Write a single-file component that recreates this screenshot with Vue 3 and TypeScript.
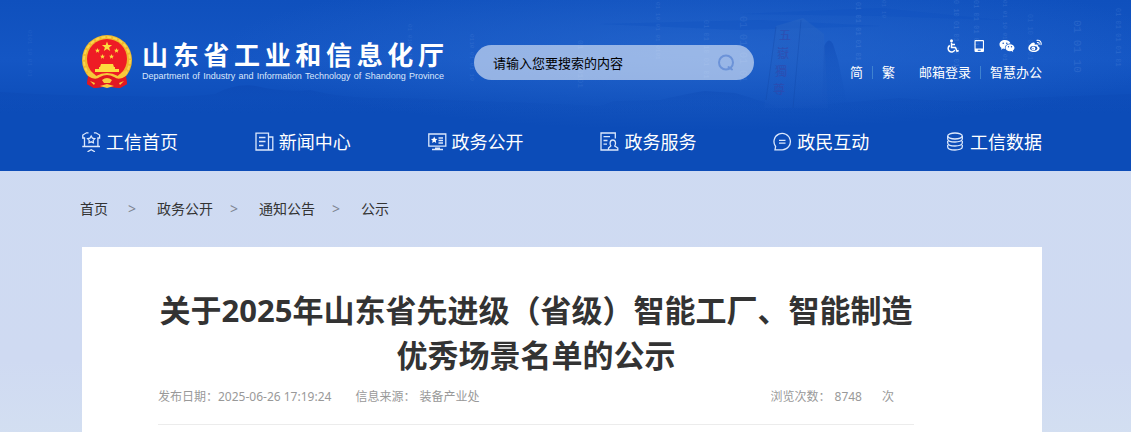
<script setup lang="ts">
import { ref } from 'vue'

type IconName = 'home' | 'news' | 'screen' | 'service' | 'chat' | 'data'

interface NavItem {
  label: string
  icon: IconName
}

interface Stream {
  x: number
  y: number
  size: number
  opacity: number
  bits: string
}

const keyword = ref('')

const navItems: NavItem[] = [
  { label: '工信首页', icon: 'home' },
  { label: '新闻中心', icon: 'news' },
  { label: '政务公开', icon: 'screen' },
  { label: '政务服务', icon: 'service' },
  { label: '政民互动', icon: 'chat' },
  { label: '工信数据', icon: 'data' },
]

const crumbs: string[] = ['首页', '政务公开', '通知公告', '公示']

const streams: Stream[] = [
  { x: 28, y: 30, size: 6, opacity: 0.08, bits: '0101 10 01 01' },
  { x: 408, y: 24, size: 6, opacity: 0.1, bits: '01 0101 10 0101' },
  { x: 470, y: 34, size: 6, opacity: 0.12, bits: '0110 01 01 10' },
  { x: 578, y: 40, size: 8, opacity: 0.1, bits: '01 10 0101' },
  { x: 656, y: 2, size: 6, opacity: 0.13, bits: '01 10 01 01 0101' },
  { x: 704, y: 20, size: 7, opacity: 0.12, bits: '01 01 10 01 01' },
  { x: 740, y: 16, size: 10, opacity: 0.1, bits: '01 01 01 01' },
  { x: 856, y: 2, size: 7, opacity: 0.16, bits: '01 01 01 01 01 0' },
  { x: 882, y: 0, size: 6, opacity: 0.12, bits: '01 10' },
  { x: 954, y: 0, size: 7, opacity: 0.16, bits: '0 10 01 01 10 01' },
  { x: 974, y: 0, size: 7, opacity: 0.16, bits: '01 01 01 01' },
  { x: 1003, y: 0, size: 6, opacity: 0.16, bits: '01 01 10 01 01 01 0' },
  { x: 1028, y: 14, size: 7, opacity: 0.1, bits: '01 10 01 01' },
  { x: 1074, y: 20, size: 11, opacity: 0.12, bits: '01 01 10' },
  { x: 1116, y: 8, size: 7, opacity: 0.14, bits: '01 01 01 01 01' },
]

const inscription: string[] = ['五', '嶽', '獨', '尊']
</script>

<template>
  <div class="page">
    <header class="header">
      <svg class="scenery" viewBox="0 0 1131 171" preserveAspectRatio="xMidYMin slice" aria-hidden="true">
        <defs>
          <linearGradient id="rock" x1="0" y1="0" x2="0" y2="1">
            <stop offset="0" stop-color="#2a66c4" stop-opacity="0.5" />
            <stop offset="1" stop-color="#1a58c0" stop-opacity="0.2" />
          </linearGradient>
          <linearGradient id="hill" x1="0" y1="0" x2="0" y2="1">
            <stop offset="0" stop-color="#0a43ae" stop-opacity="0.4" />
            <stop offset="1" stop-color="#0c4cb8" stop-opacity="0" />
          </linearGradient>
        </defs>
        <path d="M740 14 L880 8 L1000 20 L880 16 Z M600 24 L760 20 L880 26 L740 30 Z" fill="#0f4fc0" opacity="0.35" />
        <path d="M0 92 Q60 96 130 96 Q180 98 215 94 Q235 83 256 86 Q280 92 310 90 Q350 100 400 98 L560 104 L600 106 L614 101 L660 100 Q690 93 705 91 L735 93 Q760 100 780 108 L900 98 Q960 104 1020 98 L1131 94 L1131 116 L0 116 Z" fill="url(#hill)" />
        <path d="M822 108 L824 46 Q829 36 833 44 L838 60 L848 108 Z" fill="url(#hill)" />
        <path d="M764 108 L776 26 L803 18 L824 34 L828 108 Z" fill="url(#rock)" />
        <path d="M801 20 L793 108 M776 27 L766 100" stroke="#1148aa" stroke-opacity="0.4" fill="none" />
        <g v-for="(s, i) in streams" :key="i">
          <text class="bits" :transform="`translate(${s.x} ${s.y}) rotate(90)`" :font-size="s.size" :opacity="s.opacity">{{ s.bits }}</text>
        </g>
        <text
          v-for="(c, i) in inscription"
          :key="c"
          class="inscription"
          :x="779 - i * 2"
          :y="40 + i * 18"
          font-size="12"
        >{{ c }}</text>
      </svg>

      <div class="masthead">
        <a class="brand" href="#">
          <svg class="emblem" viewBox="0 0 50 54" aria-hidden="true">
            <path d="M7 38 L5 49 L12 53 L21 52 L25 50 L29 52 L38 53 L45 49 L43 38 Z" fill="#d81420" />
            <circle cx="25" cy="25" r="25" fill="#f0b92c" />
            <circle cx="25" cy="25" r="23" fill="none" stroke="#fbd54c" stroke-width="2" stroke-dasharray="4 2" />
            <circle cx="25" cy="24" r="20" fill="#ee1c25" />
            <path d="M25 6.500 l1.300 3.500 3.800.1 -3 2.300 1.100 3.600 -3.200-2.100 -3.200 2.100 1.100-3.600 -3-2.300 3.800-.1z" fill="#fddc3e" />
            <g fill="#fddc3e">
              <path d="M15.500 13 l.7 1.700 1.800.1 -1.400 1.100 .5 1.800 -1.600-1 -1.600 1 .5-1.800 -1.400-1.100 1.800-.1z" />
              <path d="M34.500 13 l.7 1.700 1.800.1 -1.400 1.100 .5 1.800 -1.600-1 -1.600 1 .5-1.800 -1.400-1.100 1.800-.1z" />
              <path d="M20.500 19 l.7 1.700 1.800.1 -1.400 1.100 .5 1.800 -1.600-1 -1.600 1 .5-1.800 -1.400-1.100 1.800-.1z" />
              <path d="M29.500 19 l.7 1.700 1.800.1 -1.400 1.100 .5 1.800 -1.600-1 -1.600 1 .5-1.800 -1.400-1.100 1.800-.1z" />
              <path d="M19 29 h12 l1 3 h-14z M17 32 h16 v2 h4 v3 H13 v-3 h4z" />
            </g>
            <path d="M5 35 Q11 37 14 41 Q25 35 36 41 Q39 37 45 35 L43 42 Q37 45 33 43 Q25 39 17 43 Q13 45 7 42 Z" fill="#f7c93a" />
            <path d="M6 41 Q13 46 18 42 Q25 38 32 42 Q37 46 44 41 L45 49 L38 53 L29 52 L25 50 L21 52 L12 53 L5 49 Z" fill="#e01822" />
            <path d="M20 45 Q25 41 30 45 L28 48 H22 Z M8 46 l5 2 -1 2z M42 46 l-5 2 1 2z M18 51 L25 49 L32 51 L25 53 Z" fill="#f9cf3d" />
          </svg>
          <span class="brand-text">
            <span class="brand-cn">山东省工业和信息化厅</span>
            <span class="brand-en">Department of Industry and Information Technology of Shandong Province</span>
          </span>
        </a>

        <form class="search" role="search" @submit.prevent>
          <input v-model="keyword" class="search-input" type="text" placeholder="请输入您要搜索的内容" aria-label="搜索" />
          <button class="search-button" type="submit" aria-label="搜索">
            <svg viewBox="0 0 18 18" aria-hidden="true">
              <circle cx="9" cy="8.500" r="7" fill="none" stroke="#6c93d8" stroke-width="2" />
              <path d="M11.500 13 L15 15.500" stroke="#6c93d8" stroke-width="2" stroke-linecap="round" />
            </svg>
          </button>
        </form>

        <div class="tools">
          <div class="tool-icons">
            <a href="#" aria-label="无障碍">
              <svg viewBox="0 0 14 14" fill="none" stroke="#fff" stroke-width="1.500" aria-hidden="true">
                <circle cx="6.500" cy="1.700" r="1.500" fill="#fff" stroke="none" />
                <path d="M6.500 3.500 V8.500 H10.500 L12 12.300 L13.700 11.500 M6.500 5.500 H10" />
                <path d="M4.800 6.500 A3.500 3.500 0 1 0 9.800 11" />
              </svg>
            </a>
            <a href="#" aria-label="移动端">
              <svg viewBox="0 0 14 14" aria-hidden="true">
                <path d="M3.500 1 H11 a1 1 0 0 1 1 1 V12 a1 1 0 0 1 -1 1 H3.500 a1 1 0 0 1 -1 -1 V2 a1 1 0 0 1 1 -1 Z M3.600 2.200 V9.500 H10.900 V2.200 Z M5.800 10.800 v1 h2.900 v-1z" fill="#fff" fill-rule="evenodd" />
              </svg>
            </a>
            <a href="#" aria-label="微信">
              <svg class="wide" viewBox="0 0 16 14" aria-hidden="true">
                <path d="M6 1 C2.700 1 .5 3 .5 5.500 C.5 7 1.300 8.200 2.500 9 L2 10.700 L4.100 9.600 L6 9.900 C5.400 6.700 8 4.500 11.500 4.500 C11 2.400 8.800 1 6 1 Z" fill="#fff" />
                <path d="M11 5.300 C8.400 5.300 6.500 6.900 6.500 8.800 C6.500 10.800 8.400 12.300 11 12.300 L12.500 12.100 L14.200 13 L13.800 11.500 C14.900 10.900 15.500 9.900 15.500 8.800 C15.500 6.900 13.500 5.300 11 5.300 Z" fill="#fff" />
                <g fill="#1a57bf">
                  <circle cx="4.200" cy="4.300" r=".8" /><circle cx="7.800" cy="4.300" r=".8" />
                  <circle cx="9.500" cy="7.800" r=".7" /><circle cx="12.500" cy="7.800" r=".7" />
                </g>
              </svg>
            </a>
            <a href="#" aria-label="微博">
              <svg viewBox="0 0 14 14" aria-hidden="true">
                <path d="M5.500 3.600 C3.500 3.600 .3 6.800 .3 9.200 C.3 11.500 2.900 13 5.900 13 C9.400 13 11.600 11 11.600 9.200 C11.600 8 10.600 7.400 9.800 7.200 C10.300 5.600 9.400 4.900 6.700 5.800 C7 4.500 6.700 3.600 5.500 3.600 Z" fill="#fff" />
                <ellipse cx="5.700" cy="9.300" rx="3.600" ry="2.400" fill="#1a57bf" />
                <circle cx="5.400" cy="9.400" r="1.900" fill="#fff" />
                <circle cx="5" cy="9.700" r=".6" fill="#1a57bf" />
                <path d="M9 1.400 C11.800 .8 13.700 3 13 5.700 M9.400 3.600 C10.700 3.300 11.400 4.200 11.100 5.400" fill="none" stroke="#fff" stroke-width="1.100" stroke-linecap="round" />
              </svg>
            </a>
          </div>
          <div class="tool-links">
            <a href="#">简</a><i class="bar"></i><a href="#">繁</a>
            <a class="mail" href="#">邮箱登录</a><i class="bar"></i><a href="#">智慧办公</a>
          </div>
        </div>
      </div>

      <nav class="nav">
        <a v-for="item in navItems" :key="item.label" class="nav-item" href="#">
          <svg class="nav-icon" viewBox="0 0 20 20" aria-hidden="true">
            <g v-if="item.icon === 'home'">
              <path d="M2.500 14 V6 H.8 V3 L4.500 .8 H6.500 M11.900 .8 H13.900 L17.600 3 V6 H15.900 V14 M.3 14.500 H18" />
              <path d="M9.200 4 l1.200 2.100 2.400.5 -1.600 1.800 .2 2.400 -2.200-1 -2.200 1 .2-2.400 -1.600-1.800 2.400-.5z" />
              <path d="M5.500 19.800 L9.200 17.800 L12.900 19.800" />
            </g>
            <g v-else-if="item.icon === 'news'">
              <path d="M1 1.200 H13.500 V18 H1 Z M13.500 5 H17.800 V18 H13.500 M4 5.500 H10.500 M4 9.500 H10.500 M4 13.500 H8.500" />
            </g>
            <g v-else-if="item.icon === 'screen'">
              <path d="M.8 2 H17.800 V14.200 H.8 Z M10.500 6 H15 M10.500 8.500 H15 M10.500 11 H15 M7 16.200 H12 M4 17.500 H15" />
              <path d="M6.200 4.500 l1 2.200 2.300.3 -1.700 1.600 .4 2.300 -2-1.100 -2 1.100 .4-2.300 -1.700-1.600 2.300-.3z" fill="#fff" stroke="none" />
            </g>
            <g v-else-if="item.icon === 'service'">
              <path d="M8 18 H1 V1 H15.300 V6.500 M3.500 4.700 H10 M3.500 8.500 H7.500 M3.500 12.200 H7" />
              <path d="M10.800 14 C9.700 12.500 9.500 8 12.800 8 C16.100 8 15.900 12.500 14.800 14 L17.800 16 V18 H8.500 V16 Z" />
            </g>
            <g v-else-if="item.icon === 'chat'">
              <path d="M2 17.800 H9.300 A8.200 8.200 0 1 0 2.600 14.500 Z M6 8.300 H12.500 M6 11.200 H12.500" />
            </g>
            <g v-else>
              <ellipse cx="9" cy="4" rx="7.300" ry="3" />
              <path d="M1.700 4 V7 C1.700 11 16.300 11 16.300 7 V4 M1.700 9 V11 C1.700 15 16.300 15 16.300 11 V9 M1.700 13 V15 C1.700 19 16.300 19 16.300 15 V13" />
            </g>
          </svg>
          <span>{{ item.label }}</span>
        </a>
      </nav>
    </header>

    <nav class="crumbs" aria-label="当前位置">
      <template v-for="(c, i) in crumbs" :key="c">
        <span v-if="i > 0" class="sep" :class="{ first: i === 1 }">&gt;</span>
        <a href="#">{{ c }}</a>
      </template>
    </nav>

    <main class="card">
      <h1 class="title">关于2025年山东省先进级（省级）智能工厂、智能制造优秀场景名单的公示</h1>
      <div class="meta">
        <span class="date">发布日期：2025-06-26 17:19:24</span>
        <span>信息来源：</span>
        <span class="source">装备产业处</span>
        <span class="views">浏览次数：</span>
        <span class="count">8748</span>
        <span>次</span>
      </div>
    </main>
  </div>
</template>

<style>
body {
  margin: 0;
}
</style>

<style scoped>
.page {
  display: flex;
  flex-direction: column;
  min-height: 100vh;
  box-sizing: border-box;
  background: linear-gradient(#cedbf2 0, #cfdaf2 360px, #d3dff1 440px);
  font-family: "Noto Sans", "Noto Sans CJK SC", sans-serif;
  color: #333;
}

a {
  color: inherit;
  text-decoration: none;
}

.header {
  position: relative;
  overflow: hidden;
  color: #fff;
  background:
    radial-gradient(ellipse 480px 80px at 62% 50px, rgba(44, 108, 208, 0.6), rgba(44, 108, 208, 0)),
    linear-gradient(#0f50bd 0, #1456c4 60px, #0c4cb8 112px);
}

.scenery {
  position: absolute;
  top: 0;
  left: 0;
  width: 100%;
  height: 100%;
}

.bits {
  fill: #a9ccff;
  font-family: "Liberation Mono", monospace;
}

.inscription {
  fill: #3a3fa0;
  opacity: 0.5;
  font-family: "Noto Sans CJK TC", sans-serif;
}

.masthead {
  position: relative;
  display: flex;
  align-items: flex-start;
  height: 114px;
  padding: 0 89px 0 82px;
}

.brand {
  display: flex;
  gap: 10px;
  padding-top: 35px;
}

.emblem {
  width: 50px;
  height: 54px;
}

.brand-text {
  display: flex;
  flex-direction: column;
  width: 302px;
  padding-top: 4px;
}

.brand-cn {
  font-size: 26px;
  line-height: 32px;
  font-weight: 700;
  text-align: justify;
  text-align-last: justify;
}

.brand-en {
  font-family: "Liberation Sans", Arial, sans-serif;
  font-size: 9px;
  line-height: 10px;
  white-space: nowrap;
  text-align-last: justify;
  color: #dbe7fb;
}

.search {
  display: flex;
  align-items: center;
  width: 280px;
  height: 35px;
  box-sizing: border-box;
  margin: 45px 0 0 30px;
  padding: 0 19px;
  border-radius: 18px;
  background: rgba(255, 255, 255, 0.54);
}

.search-input {
  flex: 1;
  min-width: 0;
  padding: 0;
  border: 0;
  outline: 0;
  background: none;
  font: 13px/20px "Noto Sans CJK SC", sans-serif;
  color: #000;
}

.search-input::placeholder {
  color: #000;
  opacity: 1;
}

.search-button {
  display: flex;
  padding: 0;
  border: 0;
  background: none;
}

.search-button svg {
  width: 18px;
  height: 18px;
}

.tools {
  display: flex;
  flex-direction: column;
  align-items: flex-end;
  margin-left: auto;
  padding-top: 39px;
}

.tool-icons {
  display: flex;
  gap: 13px;
}

.tool-icons a {
  display: flex;
}

.tool-icons svg {
  width: 14px;
  height: 14px;
}

.tool-icons .wide {
  width: 16px;
}

.tool-links {
  display: flex;
  align-items: center;
  margin-top: 9px;
  font-size: 13px;
  line-height: 20px;
  white-space: nowrap;
}

.bar {
  width: 1px;
  height: 13px;
  margin: 0 9px;
  background: #3f82cf;
}

.mail {
  margin-left: 24px;
}

.nav {
  position: relative;
  display: flex;
  justify-content: space-between;
  padding: 14px 89px 15px 82px;
}

.nav-item {
  display: flex;
  align-items: center;
  gap: 4px;
  font-size: 18px;
  line-height: 28px;
  white-space: nowrap;
}

.nav-icon {
  width: 20px;
  height: 20px;
  fill: none;
  stroke: #dce8fc;
  stroke-width: 1.3;
}

.crumbs {
  display: flex;
  align-items: center;
  padding: 28px 89px 28px 80px;
  font-size: 14px;
  line-height: 20px;
}

.sep {
  margin: 0 21px 0 17px;
  color: #7d8590;
}

.sep.first {
  margin-left: 20px;
}

.card {
  flex: 1;
  margin: 0 89px 0 82px;
  padding: 41px 128px 0 76px;
  background: #fff;
}

.title {
  margin: 0;
  font-size: 31px;
  line-height: 45px;
  font-weight: 700;
  text-align: center;
}

.meta {
  display: flex;
  padding: 9px 20px 17px 0;
  border-bottom: 1px solid #ececec;
  font-size: 12px;
  line-height: 20px;
  color: #999;
}

.date {
  margin-right: 24px;
}

.source {
  margin-left: 4px;
}

.views {
  margin-left: auto;
}

.count {
  margin: 0 20px 0 4px;
}
</style>
